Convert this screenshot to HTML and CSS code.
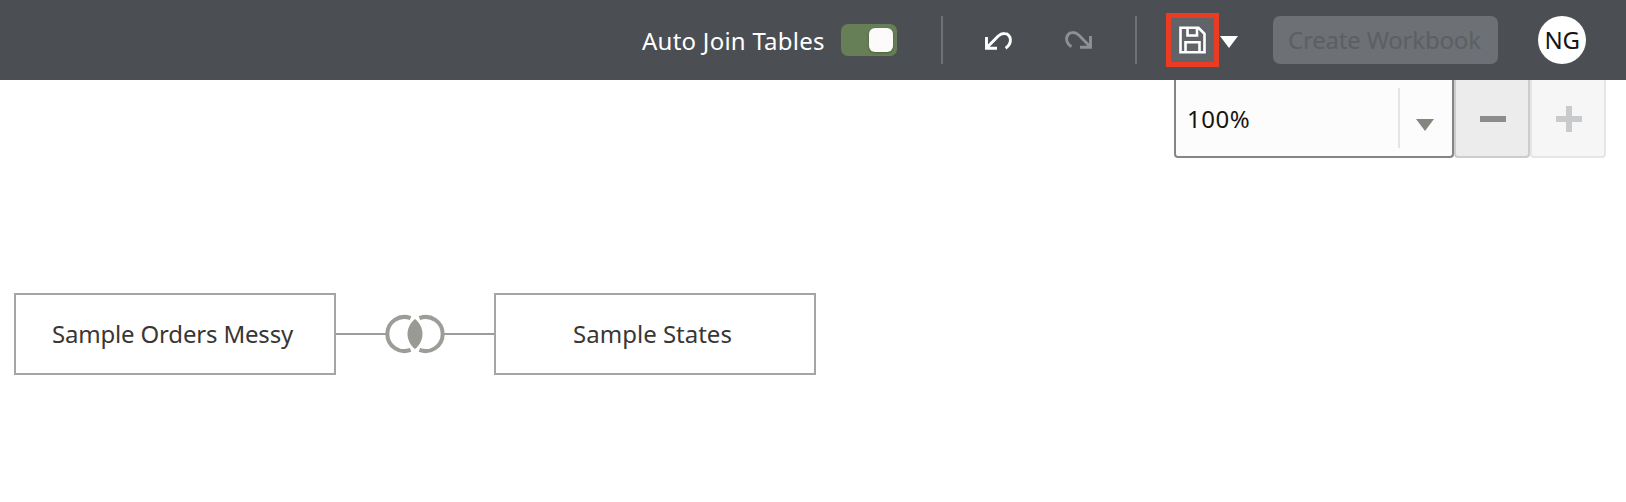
FILE: index.html
```html
<!DOCTYPE html>
<html lang="en">
<head>
<meta charset="utf-8">
<title>Dataset Editor</title>
<link rel="stylesheet" href="styles.css">
</head>
<body>
<header class="toolbar">
  <span class="toggle-label">Auto Join Tables</span>
  <div class="toggle"><div class="knob"></div></div>
  <div class="divider"></div>
  <svg class="undo" width="27" height="18" viewBox="0 0 27 18" fill="none" stroke="#fff" stroke-width="2.9"><path d="M1.500 5v11.200H12M2 15.600 13 4.200C15.500 1.900 17.500 1.400 19.500 1.500A5.900 6.200 0 0 1 25.400 8C25.400 11.600 23.600 14.200 20.600 16.200"/></svg>
  <svg class="redo" width="27" height="18" viewBox="0 0 27 18" fill="none" stroke="#8e9093" stroke-width="2.9"><path d="M25.500 5v11.200H15M25 15.600 14 4.200C11.500 1.900 9.500 1.400 7.500 1.500A5.900 6.200 0 0 0 1.600 8C1.600 11.600 3.400 13.600 6.400 15.700"/></svg>
  <div class="divider divider-save"></div>
  <div class="save">
    <svg width="27" height="28" viewBox="0 0 27 28" fill="none" stroke="#fff" stroke-width="2.6"><path d="M1.500 1.800H19.500L25.500 7.800V26.200H1.500zM8.500 2V9.500H18V2M6.500 26V16.200H20.500V26"/></svg>
  </div>
  <svg class="save-caret" width="18" height="12" viewBox="0 0 18 12"><path d="M0 0H18L9 12z" fill="#fff"/></svg>
  <div class="create"><span>Create Workbook</span></div>
  <div class="avatar"><span>NG</span></div>
</header>
<section class="zoom">
  <div class="zoom-select">
    <span class="zoom-value">100%</span>
    <div class="zoom-divider"></div>
    <svg class="zoom-caret" width="18" height="12" viewBox="0 0 18 12"><path d="M0 0H18L9 12z" fill="#858580"/></svg>
  </div>
  <div class="step minus"><svg width="26" height="26" viewBox="0 0 26 26"><path d="M0 10H26V16H0z" fill="#8c8c8c"/></svg></div>
  <div class="step plus"><svg width="26" height="26" viewBox="0 0 26 26"><path d="M0 10H10V0H16V10H26V16H16V26H10V16H0z" fill="#c9cacb"/></svg></div>
</section>
<main class="diagram">
  <div class="node"><span class="orders">Sample Orders Messy</span></div>
  <svg class="join" width="158" height="40" viewBox="0 0 158 40" fill="none">
    <path d="M0 20H50M108 20H158" stroke="#9e9c99" stroke-width="2"/>
    <path d="M74.600 4.200A17 17 0 1 0 74.600 35.800M83.400 4.200A17 17 0 1 1 83.400 35.800" stroke="#9e9c97" stroke-width="4"/>
    <path d="M79 5C89 13 89 27 79 35C69 27 69 13 79 5z" fill="#9b9994"/>
  </svg>
  <div class="node"><span class="states">Sample States</span></div>
</main>
</body>
</html>
```
FILE: styles.css
```css
* { box-sizing: border-box; }
body { margin: 0; height: 502px; overflow: hidden; background: #fff; font: 24px/32px "Noto Sans", sans-serif; }
svg { display: block; flex: none; }
span { white-space: nowrap; }
.toolbar { display: flex; height: 80px; align-items: flex-start; background: #4b4e53; color: #fff; }
.toolbar > * { flex: none; }
.toggle-label { width: 199px; margin: 25px 0 0 642px; letter-spacing: .25px; }
.toggle { display: flex; justify-content: flex-end; width: 56px; height: 32px; margin-top: 24px; padding: 4px; border-radius: 7px; background: #677f56; }
.knob { width: 24px; height: 24px; border-radius: 6px; background: #fcfbfa; box-shadow: 0 1px 3px #0004; }
.divider { width: 2px; height: 48px; margin: 16px 0 0 44px; background: #6e7175; }
.undo { margin: 32px 0 0 42px; }
.redo { margin: 31px 0 0 53px; }
.divider-save { margin-left: 43px; }
.save { display: flex; align-items: center; justify-content: center; width: 53px; height: 54px; margin: 12.500px 0 0 29px; border: 5px solid #e93c23; background: #606368; }
.save-caret { margin: 36px 0 0 1px; }
.create { display: flex; align-items: center; width: 225px; height: 48px; margin: 16px 0 0 35px; padding-left: 15px; border-radius: 7px; background: #6d7074; color: #5c5f63; letter-spacing: -.2px; }
.avatar { display: flex; align-items: center; justify-content: center; width: 48px; height: 48px; margin: 16px 0 0 40px; border-radius: 50%; background: #fff; color: #161513; letter-spacing: -.3px; }
.zoom { display: flex; height: 78px; padding-left: 1174px; }
.zoom-select { display: flex; width: 280px; height: 78px; border: 2px solid #858585; border-top: 0; border-radius: 0 0 4px 4px; background: #fcfcfc; color: #161513; }
.zoom-value { width: 211px; margin: 23px 0 0 11px; letter-spacing: .5px; }
.zoom-divider { width: 2px; height: 60px; margin-top: 8px; background: #e4e4e4; }
.zoom-caret { margin: 39px 0 0 16px; }
.step { display: flex; justify-content: center; width: 76px; height: 78px; padding: 26px 0 0 2px; border: 2px solid #ccc; border-top: 0; border-radius: 0 0 4px 4px; background: #ececec; }
.plus { border-color: #e6e6e6; background: #f6f6f6; }
.diagram { display: flex; align-items: center; height: 82px; margin: 135px 0 0 14px; }
.node { display: flex; align-items: center; justify-content: center; width: 322px; height: 82px; padding-right: 5px; border: 2px solid #a5a5a5; color: #3a3632; }
.orders { letter-spacing: -.18px; }
```
